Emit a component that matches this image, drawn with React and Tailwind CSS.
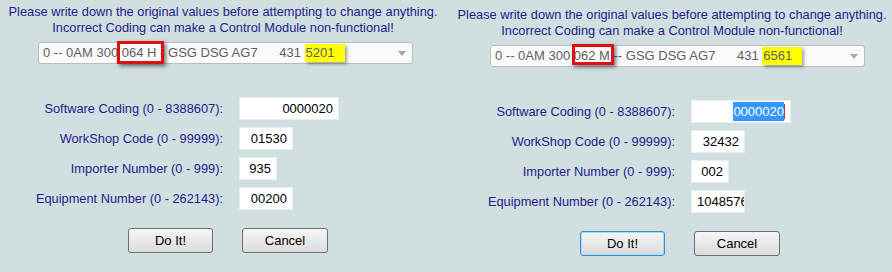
import React from 'react'

const font = { fontFamily: '"Liberation Sans", Arial, sans-serif' }

const Field = ({ label, value, width, selected, clip }) => (
    <>
        <div className="flex items-center justify-end text-[12.8px] text-[#231d8c]">{label}</div>
        <div
            className={`flex h-[23px] items-center overflow-hidden border border-[#e6eeee] bg-white text-[13px] text-black ${width} ${clip ? 'justify-start pl-[5px]' : 'justify-end pr-[5px]'}`}
        >
            {selected ? (
                <>
                    <span className="bg-[#3399ff] text-white">{value}</span>
                    <span className="h-[15px] w-px bg-[#c0392b]" />
                </>
            ) : (
                <span className="whitespace-nowrap">{value}</span>
            )}
        </div>
    </>
)

const Panel = ({ code, after, id, fields, focused, boxClass, shift }) => (
    <div className={`w-[446px] shrink-0 ${shift}`}>
        <div className="pt-[4px] text-center text-[12.8px] leading-[16px] text-[#231d8c]">
            <p className="whitespace-nowrap">Please write down the original values before attempting to change anything.</p>
            <p className="whitespace-nowrap">Incorrect Coding can make a Control Module non-functional!</p>
        </div>

        {/* module select */}
        <div className="ml-[38px] mt-[6px] flex h-[22px] w-[375px] items-center justify-between rounded-[3px] border border-[#b9bfc0] bg-[#fafafa] pl-[4px] pr-[6px]">
            <span className="whitespace-pre text-[13px] leading-[16px] text-[#5f5f5f]">
                {'0 -- 0AM 300 '}
                <span className="relative">
                    {code}
                    <span className={`absolute border-[3px] border-[#e01010] shadow-[2px_2px_4px_rgba(0,0,0,0.55)] ${boxClass}`} />
                </span>
                {after + ' GSG DSG AG7      431 '}
                <span className="bg-[#ffff00] pb-[2px] pl-[1px] pr-[10px] pt-[1px] shadow-[2px_2px_3px_rgba(0,0,0,0.35)]">{id}</span>
            </span>
            <svg width="8" height="5" viewBox="0 0 8 5">
                <path d="M0 0h8L4 5z" fill="#a9a9a9" />
            </svg>
        </div>

        {/* coding fields */}
        <div className="mt-[33px] grid grid-cols-[223px_auto] justify-start gap-x-[16px] gap-y-[7px]">
            {fields.map((f) => (
                <Field key={f.label} {...f} />
            ))}
        </div>

        <div className="mt-[18px] flex gap-[29px] pl-[128px] text-[13px] text-black">
            <button
                className={`h-[25px] w-[85px] rounded-[3px] border bg-gradient-to-b from-[#f6f6f6] to-[#dcdcdc] ${focused ? 'border-[#3c8fce] shadow-[inset_0_0_0_1px_#a8dcf5]' : 'border-[#707070]'}`}
            >
                Do It!
            </button>
            <button className="h-[25px] w-[86px] rounded-[3px] border border-[#707070] bg-gradient-to-b from-[#f6f6f6] to-[#dcdcdc]">
                Cancel
            </button>
        </div>
    </div>
)

export default function App() {
    return (
        <div style={font} className="flex h-[272px] w-[892px] overflow-hidden bg-[#d1dfe0]">
            <Panel
                code="064 H"
                after=" -"
                id="5201"
                boxClass="-left-[5px] -right-[8px] -top-[4px] -bottom-[4px]"
                shift=""
                fields={[
                    { label: 'Software Coding (0 - 8388607):', value: '0000020', width: 'w-[100px]' },
                    { label: 'WorkShop Code (0 - 99999):', value: '01530', width: 'w-[54px]' },
                    { label: 'Importer Number (0 - 999):', value: '935', width: 'w-[38px]' },
                    { label: 'Equipment Number (0 - 262143):', value: '00200', width: 'w-[54px]' },
                ]}
            />
            <Panel
                code="062 M"
                after=" --"
                id="6561"
                focused
                boxClass="-left-[2px] -right-[4px] -top-[4px] -bottom-[2px]"
                shift="pl-[6px] pt-[3px]"
                fields={[
                    { label: 'Software Coding (0 - 8388607):', value: '0000020', width: 'w-[100px]', selected: true },
                    { label: 'WorkShop Code (0 - 99999):', value: '32432', width: 'w-[54px]' },
                    { label: 'Importer Number (0 - 999):', value: '002', width: 'w-[38px]' },
                    { label: 'Equipment Number (0 - 262143):', value: '1048576', width: 'w-[54px]', clip: true },
                ]}
            />
        </div>
    )
}
